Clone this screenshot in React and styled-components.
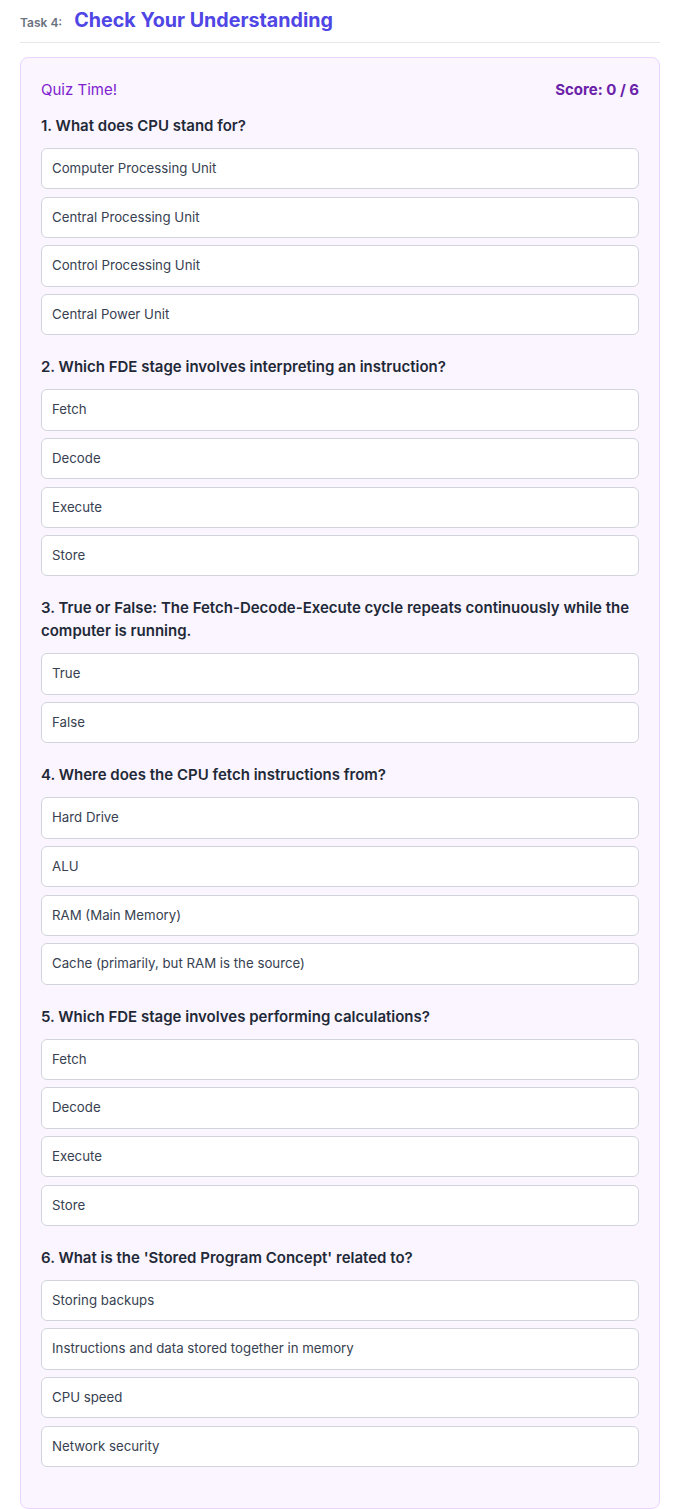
import React from "react";
import styled, { createGlobalStyle } from "styled-components";

const questions = [
  {
    q: "1. What does CPU stand for?",
    options: [
      "Computer Processing Unit",
      "Central Processing Unit",
      "Control Processing Unit",
      "Central Power Unit",
    ],
  },
  {
    q: "2. Which FDE stage involves interpreting an instruction?",
    options: ["Fetch", "Decode", "Execute", "Store"],
  },
  {
    q: "3. True or False: The Fetch-Decode-Execute cycle repeats continuously while the computer is running.",
    options: ["True", "False"],
  },
  {
    q: "4. Where does the CPU fetch instructions from?",
    options: [
      "Hard Drive",
      "ALU",
      "RAM (Main Memory)",
      "Cache (primarily, but RAM is the source)",
    ],
  },
  {
    q: "5. Which FDE stage involves performing calculations?",
    options: ["Fetch", "Decode", "Execute", "Store"],
  },
  {
    q: "6. What is the 'Stored Program Concept' related to?",
    options: [
      "Storing backups",
      "Instructions and data stored together in memory",
      "CPU speed",
      "Network security",
    ],
  },
];

const App = () => {
  return (
    <>
      <GlobalStyle />
      <Page>
        <TaskHeader>
          <TaskLabel>Task 4:</TaskLabel>
          <TaskTitle>Check Your Understanding</TaskTitle>
        </TaskHeader>
        <QuizCard>
          <QuizTop>
            <QuizName>Quiz Time!</QuizName>
            <Score>Score: 0 / 6</Score>
          </QuizTop>
          {questions.map((item, i) => (
            <QuestionBlock key={i}>
              <QuestionText>{item.q}</QuestionText>
              <OptionList>
                {item.options.map((opt) => (
                  <OptionButton key={opt}>{opt}</OptionButton>
                ))}
              </OptionList>
            </QuestionBlock>
          ))}
        </QuizCard>
      </Page>
    </>
  );
};

const GlobalStyle = createGlobalStyle`
  body {
    margin: 0;
    background: #ffffff;
    font-family: Inter, "Noto Sans", sans-serif;
  }
`;

const Page = styled.div`
  padding: 0 18px 0 20px;
`;

const TaskHeader = styled.div`
  display: flex;
  align-items: baseline;
  gap: 12px;
  padding: 7px 0 9px;
  border-bottom: 1px solid #e5e7eb;
  margin-bottom: 14px;
`;

const TaskLabel = styled.span`
  font-size: 12px;
  font-weight: 600;
  color: #6b7280;
`;

const TaskTitle = styled.h2`
  margin: 0;
  font-size: 19.7px;
  line-height: 26px;
  font-weight: 700;
  color: #4f46e5;
`;

const QuizCard = styled.div`
  background: #faf5ff;
  border: 1px solid #e9d5ff;
  border-radius: 8px;
  padding: 20px 20px 21px;
`;

const QuizTop = styled.div`
  display: flex;
  justify-content: space-between;
  align-items: center;
  margin-bottom: 12px;
  line-height: 24px;
`;

const QuizName = styled.span`
  font-size: 15px;
  color: #7e22ce;
`;

const Score = styled.span`
  font-size: 15px;
  font-weight: 700;
  color: #6b21a8;
`;

const QuestionBlock = styled.div`
  margin-bottom: 20px;
`;

const QuestionText = styled.p`
  margin: 0 0 11px;
  font-size: 15px;
  line-height: 23px;
  font-weight: 600;
  color: #1f2937;
`;

const OptionList = styled.div`
  display: flex;
  flex-direction: column;
  gap: 7.35px;
`;

const OptionButton = styled.button`
  display: block;
  width: 100%;
  text-align: left;
  background: #ffffff;
  border: 1px solid #d1d5db;
  border-radius: 6px;
  padding: 11px 10px;
  font-family: Inter, "Noto Sans", sans-serif;
  font-size: 13.25px;
  line-height: 17.3px;
  color: #374151;
  cursor: pointer;
`;

export default App;
